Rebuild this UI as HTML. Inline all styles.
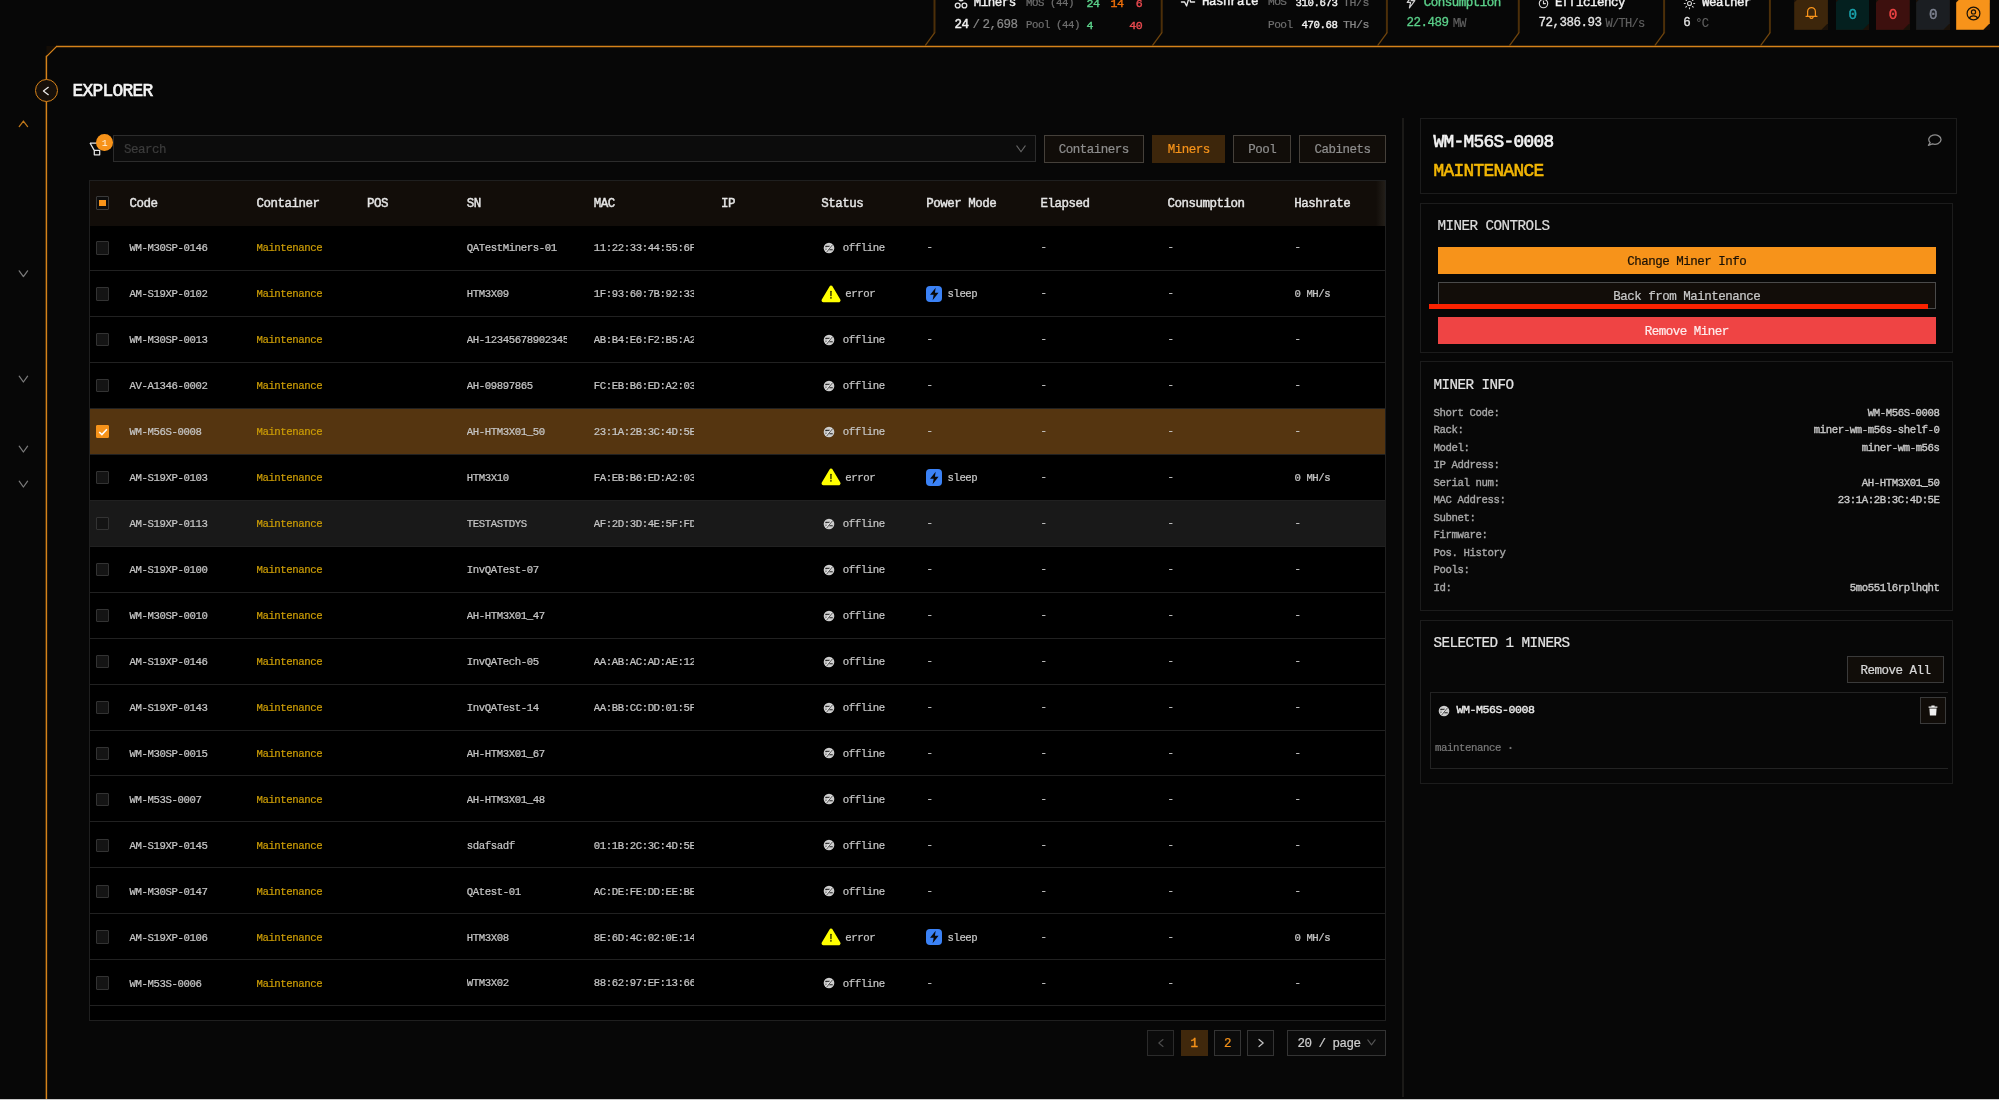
<!DOCTYPE html>
<html lang="en">
<head>
<meta charset="utf-8">
<title>Explorer</title>
<style>
*{box-sizing:border-box;margin:0;padding:0}
html,body{width:1999px;height:1100px;overflow:hidden;background:#070707}
body{position:relative;font-family:"Liberation Mono","DejaVu Sans Mono",monospace;color:#d6d6d6;-webkit-font-smoothing:antialiased}
#root{position:absolute;left:0;top:0;width:1999px;height:1100px;will-change:transform}
.t{position:absolute;line-height:1;white-space:pre;-webkit-text-stroke:0.22px}
.abs{position:absolute}
svg{position:absolute;overflow:visible}
.box{position:absolute;border:1px solid #1d1d1d}
.cb{position:absolute;left:96px;width:13.4px;height:13.4px;border:1px solid #333;background:#141414;border-radius:1px}
.clip{position:absolute;overflow:hidden;height:14px;width:100px}
.clip .t{left:0}
.btn{position:absolute;border:1px solid #3e3a35;background:#110d09}
</style>
</head>
<body>
<div id="root">

<svg width="1999" height="1100" style="left:0;top:0" fill="none" stroke="#d5821a" stroke-width="1.5">
<path d="M46.4 1100 V56.4 L56.4 46.4 H1999"/>
<path d="M46.4 46 L56 46 L46.4 55.8 Z" fill="#140d06" stroke="none"/>
<path d="M934.5 0 V33" stroke="#4c2f09" stroke-width="2"/>
<path d="M934.7 32.6 L925.2 45.6" stroke="#70450d" stroke-width="1.3"/>
<path d="M1161.7 0 V33" stroke="#4c2f09" stroke-width="2"/>
<path d="M1161.9 32.6 L1152.4 45.6" stroke="#70450d" stroke-width="1.3"/>
<path d="M1386.9 0 V33" stroke="#4c2f09" stroke-width="2"/>
<path d="M1387.1 32.6 L1377.6 45.6" stroke="#70450d" stroke-width="1.3"/>
<path d="M1518.8 0 V33" stroke="#4c2f09" stroke-width="2"/>
<path d="M1519.0 32.6 L1509.5 45.6" stroke="#70450d" stroke-width="1.3"/>
<path d="M1664.1 0 V33" stroke="#4c2f09" stroke-width="2"/>
<path d="M1664.3 32.6 L1654.8 45.6" stroke="#70450d" stroke-width="1.3"/>
<path d="M1769.9 0 V33" stroke="#4c2f09" stroke-width="2"/>
<path d="M1770.1 32.6 L1760.6 45.6" stroke="#70450d" stroke-width="1.3"/>
</svg>
<svg width="14" height="14" style="left:953.6px;top:-5px" viewBox="0 0 14 14" fill="none" stroke="#e4e4e4" stroke-width="1.35"><circle cx="7" cy="3.3" r="2.45"/><circle cx="3.7" cy="10.5" r="2.4"/><circle cx="10.4" cy="10.5" r="2.4"/></svg>
<span class="t" style="top:-2.67px;font-size:12.49px;letter-spacing:-0.490px;color:#f2f2f2;-webkit-text-stroke:0.42px;left:973.80px;">Miners</span>
<span class="t" style="top:-2.10px;font-size:10.70px;letter-spacing:-0.420px;color:#6f6f6f;left:1026.00px;">MOS (44)</span>
<span class="t" style="top:-1.98px;font-size:11.59px;letter-spacing:-0.455px;color:#5bd08a;-webkit-text-stroke:0.39px;left:1086.60px;">24</span>
<span class="t" style="top:-1.98px;font-size:11.59px;letter-spacing:-0.455px;color:#f0700a;-webkit-text-stroke:0.39px;left:1110.60px;">14</span>
<span class="t" style="top:-1.98px;font-size:11.59px;letter-spacing:-0.455px;color:#ea4a50;-webkit-text-stroke:0.39px;right:856.80px;text-align:right;">6</span>
<span class="t" style="top:19.13px;font-size:12.49px;letter-spacing:-0.490px;color:#f2f2f2;-webkit-text-stroke:0.42px;left:954.60px;">24</span>
<span class="t" style="top:19.13px;font-size:12.49px;letter-spacing:-0.490px;color:#8a8a8a;left:972.40px;">/</span>
<span class="t" style="top:19.13px;font-size:12.49px;letter-spacing:-0.490px;color:#8a8a8a;left:982.60px;">2,698</span>
<span class="t" style="top:19.70px;font-size:10.70px;letter-spacing:-0.420px;color:#6f6f6f;left:1026.00px;">Pool (44)</span>
<span class="t" style="top:19.82px;font-size:11.59px;letter-spacing:-0.455px;color:#5bd08a;-webkit-text-stroke:0.39px;left:1086.60px;">4</span>
<span class="t" style="top:19.82px;font-size:11.59px;letter-spacing:-0.455px;color:#ea4a50;-webkit-text-stroke:0.39px;right:856.80px;text-align:right;">40</span>
<svg width="14" height="12" style="left:1181px;top:-6.5px" viewBox="0 0 14 12" fill="none" stroke="#e8e8e8" stroke-width="1.3" stroke-linejoin="round" stroke-linecap="round"><path d="M0.4 8 H3.6 L5.6 12 L8.2 3 L9.6 8 H13.6"/></svg>
<span class="t" style="top:-3.67px;font-size:12.49px;letter-spacing:-0.490px;color:#f2f2f2;-webkit-text-stroke:0.42px;left:1201.90px;">Hashrate</span>
<span class="t" style="top:-2.63px;font-size:11.13px;letter-spacing:-0.437px;color:#6f6f6f;left:1267.90px;">MOS</span>
<span class="t" style="top:-2.30px;font-size:10.70px;letter-spacing:-0.420px;color:#f2f2f2;-webkit-text-stroke:0.36px;right:661.60px;text-align:right;">310.673</span>
<span class="t" style="top:-2.98px;font-size:11.59px;letter-spacing:-0.455px;color:#6f6f6f;left:1343.00px;">TH/s</span>
<span class="t" style="top:19.97px;font-size:11.13px;letter-spacing:-0.437px;color:#6f6f6f;left:1267.90px;">Pool</span>
<span class="t" style="top:19.70px;font-size:10.70px;letter-spacing:-0.420px;color:#f2f2f2;-webkit-text-stroke:0.36px;right:661.60px;text-align:right;">470.68</span>
<span class="t" style="top:19.02px;font-size:11.59px;letter-spacing:-0.455px;color:#8a8a8a;left:1343.00px;">TH/s</span>
<svg width="10" height="14" style="left:1405.5px;top:-5px" viewBox="0 0 10 14" fill="none" stroke="#cfcfcf" stroke-width="1.2" stroke-linejoin="round"><path d="M6.2 0.8 L1.2 7.4 H4.6 L3.4 13 L8.8 5.6 H5.2 Z"/></svg>
<span class="t" style="top:-2.67px;font-size:12.49px;letter-spacing:-0.490px;color:#5bd08a;-webkit-text-stroke:0.42px;left:1423.80px;">Consumption</span>
<span class="t" style="top:17.33px;font-size:12.49px;letter-spacing:-0.490px;color:#5bd08a;-webkit-text-stroke:0.30px;left:1406.60px;">22.489</span>
<span class="t" style="top:17.64px;font-size:12.09px;letter-spacing:-0.475px;color:#606060;-webkit-text-stroke:0.15px;letter-spacing:-0.756px;left:1452.80px;">MW</span>
<svg width="11" height="11" style="left:1537.5px;top:-1.6px" viewBox="0 0 11 11" fill="none" stroke="#d8d8d8" stroke-width="1.15" stroke-linecap="round"><circle cx="5.5" cy="5.5" r="4.2"/><path d="M5.5 3.1 V5.6 H7.4"/></svg>
<span class="t" style="top:-2.67px;font-size:12.49px;letter-spacing:-0.490px;color:#f2f2f2;-webkit-text-stroke:0.42px;left:1555.00px;">Efficiency</span>
<span class="t" style="top:17.33px;font-size:12.49px;letter-spacing:-0.490px;color:#e4e4e4;-webkit-text-stroke:0.30px;left:1538.40px;">72,386.93</span>
<span class="t" style="top:17.64px;font-size:12.09px;letter-spacing:-0.475px;color:#606060;-webkit-text-stroke:0.15px;letter-spacing:-0.756px;left:1605.60px;">W/TH/s</span>
<svg width="13" height="13" style="left:1682.6px;top:-2.9px" viewBox="0 0 13 13" fill="none" stroke="#d0d0d0" stroke-width="1.1" stroke-linecap="round"><circle cx="6.5" cy="6.5" r="2"/><path d="M6.5 1.3v1M6.5 10.7v1M1.3 6.5h1M10.7 6.5h1M2.8 2.8l0.7 0.7M9.5 9.5l0.7 0.7M2.8 10.2l0.7-0.7M9.5 3.5l0.7-0.7"/></svg>
<span class="t" style="top:-2.67px;font-size:12.49px;letter-spacing:-0.490px;color:#f2f2f2;-webkit-text-stroke:0.42px;left:1701.90px;">Weather</span>
<span class="t" style="top:17.33px;font-size:12.49px;letter-spacing:-0.490px;color:#e4e4e4;-webkit-text-stroke:0.30px;left:1683.30px;">6</span>
<span class="t" style="top:17.64px;font-size:12.09px;letter-spacing:-0.475px;color:#606060;-webkit-text-stroke:0.15px;letter-spacing:-0.756px;left:1695.20px;">°C</span>
<div class="abs" style="left:1794.3px;top:-3.6px;width:33.6px;height:33.4px;background:#1a1109"></div>
<div class="abs" style="left:1794.3px;top:-3.6px;width:33.6px;height:33.4px;background:#3d260b;clip-path:polygon(6px 0,100% 0,100% calc(100% - 6.5px),calc(100% - 6.5px) 100%,0 100%,0 6px)"><svg width="13" height="14" style="left:10.3px;top:9.6px" viewBox="0 0 13 14" fill="none" stroke="#f7931a" stroke-width="1.25" stroke-linejoin="round" stroke-linecap="round"><path d="M2.6 10.3 V5.8 a3.9 4.3 0 0 1 7.8 0 V10.3 M1 10.3 H12 M4.9 11.2 a1.7 1.9 0 0 0 3.2 0"/></svg></div>
<div class="abs" style="left:1835.8px;top:-3.6px;width:33.6px;height:33.4px;background:#1a1109"></div>
<div class="abs" style="left:1835.8px;top:-3.6px;width:33.6px;height:33.4px;background:#04201f;clip-path:polygon(6px 0,100% 0,100% calc(100% - 6.5px),calc(100% - 6.5px) 100%,0 100%,0 6px)"><span class="t" style="left:0;width:33.6px;text-align:center;top:11.6px;font-size:14.26px;letter-spacing:-0.560px;color:#1aa3ad;-webkit-text-stroke:0.45px">0</span></div>
<div class="abs" style="left:1876.0px;top:-3.6px;width:33.6px;height:33.4px;background:#1a1109"></div>
<div class="abs" style="left:1876.0px;top:-3.6px;width:33.6px;height:33.4px;background:#3d100e;clip-path:polygon(6px 0,100% 0,100% calc(100% - 6.5px),calc(100% - 6.5px) 100%,0 100%,0 6px)"><span class="t" style="left:0;width:33.6px;text-align:center;top:11.6px;font-size:14.26px;letter-spacing:-0.560px;color:#ef4444;-webkit-text-stroke:0.45px">0</span></div>
<div class="abs" style="left:1916.2px;top:-3.6px;width:33.6px;height:33.4px;background:#1a1109"></div>
<div class="abs" style="left:1916.2px;top:-3.6px;width:33.6px;height:33.4px;background:#1b1e22;clip-path:polygon(6px 0,100% 0,100% calc(100% - 6.5px),calc(100% - 6.5px) 100%,0 100%,0 6px)"><span class="t" style="left:0;width:33.6px;text-align:center;top:11.6px;font-size:14.26px;letter-spacing:-0.560px;color:#7d8290;-webkit-text-stroke:0.45px">0</span></div>
<div class="abs" style="left:1956.2px;top:-3.6px;width:33.6px;height:33.4px;background:#1a1109"></div>
<div class="abs" style="left:1956.2px;top:-3.6px;width:33.6px;height:33.4px;background:#f7931a;clip-path:polygon(6px 0,100% 0,100% calc(100% - 6.5px),calc(100% - 6.5px) 100%,0 100%,0 6px)"><svg width="15" height="15" style="left:9.4px;top:9.2px" viewBox="0 0 15 15" fill="none" stroke="#1a1208" stroke-width="1.2"><circle cx="7.5" cy="7.5" r="6.4"/><circle cx="7.5" cy="5.9" r="2.1"/><path d="M3.4 12.2 a4.3 3.4 0 0 1 8.2 0"/></svg></div>
<svg width="60" height="600" style="left:0;top:0" fill="none" stroke-width="1.25" stroke-linecap="round" stroke-linejoin="round">
<path d="M19.2 126.6 L23.4 121 L27.6 126.6" stroke="#c0781a"/>
<path d="M19.2 270.8 L23.4 276.6 L27.6 270.8" stroke="#7a7a7a"/>
<path d="M19.2 376.2 L23.4 382.0 L27.6 376.2" stroke="#7a7a7a"/>
<path d="M19.2 446.2 L23.4 452.0 L27.6 446.2" stroke="#7a7a7a"/>
<path d="M19.2 481.2 L23.4 487.0 L27.6 481.2" stroke="#7a7a7a"/>
</svg>
<div class="abs" style="left:35px;top:79.1px;width:22.8px;height:22.8px;border-radius:50%;border:1.2px solid #d7831a;background:#17100a"></div>
<svg width="10" height="10" style="left:41px;top:85.6px" viewBox="0 0 10 10" fill="none" stroke="#ededed" stroke-width="1.2" stroke-linecap="round" stroke-linejoin="round"><path d="M7.3 1.3 L2.4 5 L7.3 8.7"/></svg>
<span class="t" style="top:82.94px;font-size:17.84px;letter-spacing:-0.700px;color:#f4f4f4;-webkit-text-stroke:0.61px;left:72.40px;">EXPLORER</span>
<svg width="14" height="15" style="left:89px;top:141.6px" viewBox="0 0 14 15" fill="none" stroke="#e6e6e6" stroke-width="1.25" stroke-linejoin="round"><path d="M1 1 H12.6 L9.6 6 M1 1 L5.4 8.6 M5.3 8.4 H10.7 V12.8 H5.3 Z"/></svg>
<div class="abs" style="left:96.1px;top:134.3px;width:16.7px;height:16.7px;border-radius:50%;background:#f7931a"></div>
<span class="t" style="top:139.16px;font-size:9.84px;letter-spacing:-0.386px;color:#fff1dc;-webkit-text-stroke:0;left:104.40px;width:400px;margin-left:-200px;text-align:center;">1</span>
<div class="abs" style="left:113px;top:135.2px;width:922.8px;height:26.6px;border:1px solid #2c2c2c;background:#0c0c0c"></div>
<span class="t" style="top:143.93px;font-size:12.49px;letter-spacing:-0.490px;color:#3c3c3c;left:123.90px;">Search</span>
<svg width="10" height="8" style="left:1016.4px;top:144.6px" viewBox="0 0 10 8" fill="none" stroke="#666" stroke-width="1.1" stroke-linecap="round" stroke-linejoin="round"><path d="M0.8 0.9 L5 6.8 L9.2 0.9"/></svg>
<div class="btn" style="left:1043.5px;top:134.5px;width:100.7px;height:28.3px;border-color:#45403a"></div>
<span class="t" style="top:143.93px;font-size:12.49px;letter-spacing:-0.490px;color:#8e8e8e;left:1093.85px;width:400px;margin-left:-200px;text-align:center;">Containers</span>
<div class="abs" style="left:1152.2px;top:134.5px;width:73.0px;height:28.3px;background:#3d260b"></div>
<span class="t" style="top:143.93px;font-size:12.49px;letter-spacing:-0.490px;color:#f7931a;left:1188.70px;width:400px;margin-left:-200px;text-align:center;">Miners</span>
<div class="btn" style="left:1233.2px;top:134.5px;width:58.2px;height:28.3px;border-color:#45403a"></div>
<span class="t" style="top:143.93px;font-size:12.49px;letter-spacing:-0.490px;color:#8e8e8e;left:1262.30px;width:400px;margin-left:-200px;text-align:center;">Pool</span>
<div class="btn" style="left:1299.2px;top:134.5px;width:86.8px;height:28.3px;border-color:#45403a"></div>
<span class="t" style="top:143.93px;font-size:12.49px;letter-spacing:-0.490px;color:#8e8e8e;left:1342.60px;width:400px;margin-left:-200px;text-align:center;">Cabinets</span>
<div class="abs" style="left:89.0px;top:180px;width:1296.8px;height:840.6px;background:#000;border:1px solid #1f1f1f"></div>
<div class="abs" style="left:89.6px;top:180.6px;width:1295.6px;height:45px;background:#120d09"></div>
<div class="abs" style="left:1376px;top:180.6px;width:9.4px;height:45px;background:linear-gradient(90deg,rgba(40,36,30,0),rgba(40,36,30,.75))"></div>
<span class="t" style="top:198.03px;font-size:12.49px;letter-spacing:-0.490px;color:#e6e6e6;-webkit-text-stroke:0.42px;left:129.60px;">Code</span>
<span class="t" style="top:198.03px;font-size:12.49px;letter-spacing:-0.490px;color:#e6e6e6;-webkit-text-stroke:0.42px;left:256.40px;">Container</span>
<span class="t" style="top:198.03px;font-size:12.49px;letter-spacing:-0.490px;color:#e6e6e6;-webkit-text-stroke:0.42px;left:366.90px;">POS</span>
<span class="t" style="top:198.03px;font-size:12.49px;letter-spacing:-0.490px;color:#e6e6e6;-webkit-text-stroke:0.42px;left:466.80px;">SN</span>
<span class="t" style="top:198.03px;font-size:12.49px;letter-spacing:-0.490px;color:#e6e6e6;-webkit-text-stroke:0.42px;left:593.70px;">MAC</span>
<span class="t" style="top:198.03px;font-size:12.49px;letter-spacing:-0.490px;color:#e6e6e6;-webkit-text-stroke:0.42px;left:721.00px;">IP</span>
<span class="t" style="top:198.03px;font-size:12.49px;letter-spacing:-0.490px;color:#e6e6e6;-webkit-text-stroke:0.42px;left:821.20px;">Status</span>
<span class="t" style="top:198.03px;font-size:12.49px;letter-spacing:-0.490px;color:#e6e6e6;-webkit-text-stroke:0.42px;left:926.20px;">Power Mode</span>
<span class="t" style="top:198.03px;font-size:12.49px;letter-spacing:-0.490px;color:#e6e6e6;-webkit-text-stroke:0.42px;left:1040.40px;">Elapsed</span>
<span class="t" style="top:198.03px;font-size:12.49px;letter-spacing:-0.490px;color:#e6e6e6;-webkit-text-stroke:0.42px;left:1167.40px;">Consumption</span>
<span class="t" style="top:198.03px;font-size:12.49px;letter-spacing:-0.490px;color:#e6e6e6;-webkit-text-stroke:0.42px;left:1294.20px;">Hashrate</span>
<div class="cb" style="top:196.3px;background:#0c0c0c;border-color:#3a3a3a"></div>
<div class="abs" style="left:99.4px;top:199.7px;width:6.6px;height:6.6px;background:#f7931a"></div>
<div class="abs" style="left:89.6px;top:270.00px;width:1295.6px;height:1px;background:#212121"></div>
<div class="cb" style="top:241.20px"></div>
<span class="t" style="top:243.30px;font-size:10.70px;letter-spacing:-0.420px;color:#c6c6c6;left:129.60px;">WM-M30SP-0146</span>
<span class="t" style="top:243.30px;font-size:10.70px;letter-spacing:-0.420px;color:#cb9c06;left:256.40px;">Maintenance</span>
<div class="clip" style="left:466.8px;top:240.90px"><span class="t" style="top:2.40px;font-size:10.70px;letter-spacing:-0.420px;color:#c6c6c6;left:0.00px;">QATestMiners-01</span></div>
<div class="clip" style="left:593.7px;top:240.90px"><span class="t" style="top:2.40px;font-size:10.70px;letter-spacing:-0.420px;color:#c6c6c6;left:0.00px;">11:22:33:44:55:6F</span></div>
<svg width="12" height="12" style="left:823.40px;top:242.00px" viewBox="0 0 12 12"><circle cx="6" cy="6" r="5.3" fill="#cdcdcd"/><path d="M3.1 4.4 H7.1" stroke="#3c3c3c" stroke-width="1.25"/><path d="M6.4 7.7 H9.7" stroke="#484848" stroke-width="1.3"/><circle cx="3" cy="4.4" r="0.75" fill="#1e1e1e"/><circle cx="3" cy="7.2" r="0.6" fill="#4a4a4a"/><path d="M9.7 2.5 L3.7 10" stroke="#4e4e4e" stroke-width="0.95"/><path d="M8.9 2 L2.7 9.7" stroke="#ececec" stroke-width="0.8"/></svg>
<span class="t" style="top:243.30px;font-size:10.70px;letter-spacing:-0.420px;color:#c6c6c6;left:842.80px;">offline</span>
<span class="t" style="top:242.30px;font-size:10.70px;letter-spacing:-0.420px;color:#c6c6c6;left:926.40px;">-</span>
<span class="t" style="top:242.30px;font-size:10.70px;letter-spacing:-0.420px;color:#c6c6c6;left:1294.40px;">-</span>
<span class="t" style="top:242.30px;font-size:10.70px;letter-spacing:-0.420px;color:#c6c6c6;left:1040.60px;">-</span>
<span class="t" style="top:242.30px;font-size:10.70px;letter-spacing:-0.420px;color:#c6c6c6;left:1167.60px;">-</span>
<div class="abs" style="left:89.6px;top:315.95px;width:1295.6px;height:1px;background:#212121"></div>
<div class="cb" style="top:287.15px"></div>
<span class="t" style="top:289.25px;font-size:10.70px;letter-spacing:-0.420px;color:#c6c6c6;left:129.60px;">AM-S19XP-0102</span>
<span class="t" style="top:289.25px;font-size:10.70px;letter-spacing:-0.420px;color:#cb9c06;left:256.40px;">Maintenance</span>
<div class="clip" style="left:466.8px;top:286.85px"><span class="t" style="top:2.40px;font-size:10.70px;letter-spacing:-0.420px;color:#c6c6c6;left:0.00px;">HTM3X09</span></div>
<div class="clip" style="left:593.7px;top:286.85px"><span class="t" style="top:2.40px;font-size:10.70px;letter-spacing:-0.420px;color:#c6c6c6;left:0.00px;">1F:93:60:7B:92:33</span></div>
<svg width="20" height="18" style="left:820.6px;top:284.65px" viewBox="0 0 20 18"><path d="M10.05 2.3 L17.8 15.4 H2.3 Z" fill="#ffff00" stroke="#ffff00" stroke-width="3.5" stroke-linejoin="round"/><path d="M9.95 6.3 V10.7" stroke="#161600" stroke-width="1.25" stroke-linecap="round"/><circle cx="9.95" cy="12.9" r="0.8" fill="#161600"/></svg>
<span class="t" style="top:289.25px;font-size:10.70px;letter-spacing:-0.420px;color:#c6c6c6;left:845.20px;">error</span>
<div class="abs" style="left:926px;top:285.55px;width:15.8px;height:16.4px;border-radius:4px;background:#3b82f6"></div>
<svg width="10.6" height="13.8" style="left:928.7px;top:286.75px" viewBox="0 0 10 13"><path d="M6.3 0.6 L1 7.3 H4.4 L3.4 12.4 L9 5.4 H5.6 Z" fill="#0a0a0a"/></svg>
<span class="t" style="top:289.25px;font-size:10.70px;letter-spacing:-0.420px;color:#c6c6c6;left:947.40px;">sleep</span>
<span class="t" style="top:289.25px;font-size:10.70px;letter-spacing:-0.420px;color:#c6c6c6;left:1294.40px;">0 MH/s</span>
<span class="t" style="top:288.25px;font-size:10.70px;letter-spacing:-0.420px;color:#c6c6c6;left:1040.60px;">-</span>
<span class="t" style="top:288.25px;font-size:10.70px;letter-spacing:-0.420px;color:#c6c6c6;left:1167.60px;">-</span>
<div class="abs" style="left:89.6px;top:361.90px;width:1295.6px;height:1px;background:#212121"></div>
<div class="cb" style="top:333.10px"></div>
<span class="t" style="top:335.20px;font-size:10.70px;letter-spacing:-0.420px;color:#c6c6c6;left:129.60px;">WM-M30SP-0013</span>
<span class="t" style="top:335.20px;font-size:10.70px;letter-spacing:-0.420px;color:#cb9c06;left:256.40px;">Maintenance</span>
<div class="clip" style="left:466.8px;top:332.80px"><span class="t" style="top:2.40px;font-size:10.70px;letter-spacing:-0.420px;color:#c6c6c6;left:0.00px;">AH-12345678902345</span></div>
<div class="clip" style="left:593.7px;top:332.80px"><span class="t" style="top:2.40px;font-size:10.70px;letter-spacing:-0.420px;color:#c6c6c6;left:0.00px;">AB:B4:E6:F2:B5:A2</span></div>
<svg width="12" height="12" style="left:823.40px;top:333.90px" viewBox="0 0 12 12"><circle cx="6" cy="6" r="5.3" fill="#cdcdcd"/><path d="M3.1 4.4 H7.1" stroke="#3c3c3c" stroke-width="1.25"/><path d="M6.4 7.7 H9.7" stroke="#484848" stroke-width="1.3"/><circle cx="3" cy="4.4" r="0.75" fill="#1e1e1e"/><circle cx="3" cy="7.2" r="0.6" fill="#4a4a4a"/><path d="M9.7 2.5 L3.7 10" stroke="#4e4e4e" stroke-width="0.95"/><path d="M8.9 2 L2.7 9.7" stroke="#ececec" stroke-width="0.8"/></svg>
<span class="t" style="top:335.20px;font-size:10.70px;letter-spacing:-0.420px;color:#c6c6c6;left:842.80px;">offline</span>
<span class="t" style="top:334.20px;font-size:10.70px;letter-spacing:-0.420px;color:#c6c6c6;left:926.40px;">-</span>
<span class="t" style="top:334.20px;font-size:10.70px;letter-spacing:-0.420px;color:#c6c6c6;left:1294.40px;">-</span>
<span class="t" style="top:334.20px;font-size:10.70px;letter-spacing:-0.420px;color:#c6c6c6;left:1040.60px;">-</span>
<span class="t" style="top:334.20px;font-size:10.70px;letter-spacing:-0.420px;color:#c6c6c6;left:1167.60px;">-</span>
<div class="abs" style="left:89.6px;top:407.85px;width:1295.6px;height:1px;background:#212121"></div>
<div class="cb" style="top:379.05px"></div>
<span class="t" style="top:381.15px;font-size:10.70px;letter-spacing:-0.420px;color:#c6c6c6;left:129.60px;">AV-A1346-0002</span>
<span class="t" style="top:381.15px;font-size:10.70px;letter-spacing:-0.420px;color:#cb9c06;left:256.40px;">Maintenance</span>
<div class="clip" style="left:466.8px;top:378.75px"><span class="t" style="top:2.40px;font-size:10.70px;letter-spacing:-0.420px;color:#c6c6c6;left:0.00px;">AH-09897865</span></div>
<div class="clip" style="left:593.7px;top:378.75px"><span class="t" style="top:2.40px;font-size:10.70px;letter-spacing:-0.420px;color:#c6c6c6;left:0.00px;">FC:EB:B6:ED:A2:03</span></div>
<svg width="12" height="12" style="left:823.40px;top:379.85px" viewBox="0 0 12 12"><circle cx="6" cy="6" r="5.3" fill="#cdcdcd"/><path d="M3.1 4.4 H7.1" stroke="#3c3c3c" stroke-width="1.25"/><path d="M6.4 7.7 H9.7" stroke="#484848" stroke-width="1.3"/><circle cx="3" cy="4.4" r="0.75" fill="#1e1e1e"/><circle cx="3" cy="7.2" r="0.6" fill="#4a4a4a"/><path d="M9.7 2.5 L3.7 10" stroke="#4e4e4e" stroke-width="0.95"/><path d="M8.9 2 L2.7 9.7" stroke="#ececec" stroke-width="0.8"/></svg>
<span class="t" style="top:381.15px;font-size:10.70px;letter-spacing:-0.420px;color:#c6c6c6;left:842.80px;">offline</span>
<span class="t" style="top:380.15px;font-size:10.70px;letter-spacing:-0.420px;color:#c6c6c6;left:926.40px;">-</span>
<span class="t" style="top:380.15px;font-size:10.70px;letter-spacing:-0.420px;color:#c6c6c6;left:1294.40px;">-</span>
<span class="t" style="top:380.15px;font-size:10.70px;letter-spacing:-0.420px;color:#c6c6c6;left:1040.60px;">-</span>
<span class="t" style="top:380.15px;font-size:10.70px;letter-spacing:-0.420px;color:#c6c6c6;left:1167.60px;">-</span>
<div class="abs" style="left:89.6px;top:408.95px;width:1295.6px;height:45.35px;background:#553510"></div>
<div class="abs" style="left:89.6px;top:453.80px;width:1295.6px;height:1px;background:#212121"></div>
<div class="cb" style="top:425.00px;background:#f7931a;border-color:#f7931a"></div>
<svg width="10" height="8" style="left:97.8px;top:427.80px" viewBox="0 0 10 8" fill="none" stroke="#fff" stroke-width="1.6"><path d="M1.2 4 L3.9 6.6 L8.9 1.3"/></svg>
<span class="t" style="top:427.10px;font-size:10.70px;letter-spacing:-0.420px;color:#c6c6c6;left:129.60px;">WM-M56S-0008</span>
<span class="t" style="top:427.10px;font-size:10.70px;letter-spacing:-0.420px;color:#cb9c06;left:256.40px;">Maintenance</span>
<div class="clip" style="left:466.8px;top:424.70px"><span class="t" style="top:2.40px;font-size:10.70px;letter-spacing:-0.420px;color:#c6c6c6;left:0.00px;">AH-HTM3X01_50</span></div>
<div class="clip" style="left:593.7px;top:424.70px"><span class="t" style="top:2.40px;font-size:10.70px;letter-spacing:-0.420px;color:#c6c6c6;left:0.00px;">23:1A:2B:3C:4D:5E</span></div>
<svg width="12" height="12" style="left:823.40px;top:425.80px" viewBox="0 0 12 12"><circle cx="6" cy="6" r="5.3" fill="#cdcdcd"/><path d="M3.1 4.4 H7.1" stroke="#3c3c3c" stroke-width="1.25"/><path d="M6.4 7.7 H9.7" stroke="#484848" stroke-width="1.3"/><circle cx="3" cy="4.4" r="0.75" fill="#1e1e1e"/><circle cx="3" cy="7.2" r="0.6" fill="#4a4a4a"/><path d="M9.7 2.5 L3.7 10" stroke="#4e4e4e" stroke-width="0.95"/><path d="M8.9 2 L2.7 9.7" stroke="#ececec" stroke-width="0.8"/></svg>
<span class="t" style="top:427.10px;font-size:10.70px;letter-spacing:-0.420px;color:#c6c6c6;left:842.80px;">offline</span>
<span class="t" style="top:426.10px;font-size:10.70px;letter-spacing:-0.420px;color:#c6c6c6;left:926.40px;">-</span>
<span class="t" style="top:426.10px;font-size:10.70px;letter-spacing:-0.420px;color:#c6c6c6;left:1294.40px;">-</span>
<span class="t" style="top:426.10px;font-size:10.70px;letter-spacing:-0.420px;color:#c6c6c6;left:1040.60px;">-</span>
<span class="t" style="top:426.10px;font-size:10.70px;letter-spacing:-0.420px;color:#c6c6c6;left:1167.60px;">-</span>
<div class="abs" style="left:89.6px;top:499.75px;width:1295.6px;height:1px;background:#212121"></div>
<div class="cb" style="top:470.95px"></div>
<span class="t" style="top:473.05px;font-size:10.70px;letter-spacing:-0.420px;color:#c6c6c6;left:129.60px;">AM-S19XP-0103</span>
<span class="t" style="top:473.05px;font-size:10.70px;letter-spacing:-0.420px;color:#cb9c06;left:256.40px;">Maintenance</span>
<div class="clip" style="left:466.8px;top:470.65px"><span class="t" style="top:2.40px;font-size:10.70px;letter-spacing:-0.420px;color:#c6c6c6;left:0.00px;">HTM3X10</span></div>
<div class="clip" style="left:593.7px;top:470.65px"><span class="t" style="top:2.40px;font-size:10.70px;letter-spacing:-0.420px;color:#c6c6c6;left:0.00px;">FA:EB:B6:ED:A2:03</span></div>
<svg width="20" height="18" style="left:820.6px;top:468.45px" viewBox="0 0 20 18"><path d="M10.05 2.3 L17.8 15.4 H2.3 Z" fill="#ffff00" stroke="#ffff00" stroke-width="3.5" stroke-linejoin="round"/><path d="M9.95 6.3 V10.7" stroke="#161600" stroke-width="1.25" stroke-linecap="round"/><circle cx="9.95" cy="12.9" r="0.8" fill="#161600"/></svg>
<span class="t" style="top:473.05px;font-size:10.70px;letter-spacing:-0.420px;color:#c6c6c6;left:845.20px;">error</span>
<div class="abs" style="left:926px;top:469.35px;width:15.8px;height:16.4px;border-radius:4px;background:#3b82f6"></div>
<svg width="10.6" height="13.8" style="left:928.7px;top:470.55px" viewBox="0 0 10 13"><path d="M6.3 0.6 L1 7.3 H4.4 L3.4 12.4 L9 5.4 H5.6 Z" fill="#0a0a0a"/></svg>
<span class="t" style="top:473.05px;font-size:10.70px;letter-spacing:-0.420px;color:#c6c6c6;left:947.40px;">sleep</span>
<span class="t" style="top:473.05px;font-size:10.70px;letter-spacing:-0.420px;color:#c6c6c6;left:1294.40px;">0 MH/s</span>
<span class="t" style="top:472.05px;font-size:10.70px;letter-spacing:-0.420px;color:#c6c6c6;left:1040.60px;">-</span>
<span class="t" style="top:472.05px;font-size:10.70px;letter-spacing:-0.420px;color:#c6c6c6;left:1167.60px;">-</span>
<div class="abs" style="left:89.6px;top:500.85px;width:1295.6px;height:45.35px;background:#191919"></div>
<div class="abs" style="left:89.6px;top:545.70px;width:1295.6px;height:1px;background:#212121"></div>
<div class="cb" style="top:516.90px"></div>
<span class="t" style="top:519.00px;font-size:10.70px;letter-spacing:-0.420px;color:#c6c6c6;left:129.60px;">AM-S19XP-0113</span>
<span class="t" style="top:519.00px;font-size:10.70px;letter-spacing:-0.420px;color:#cb9c06;left:256.40px;">Maintenance</span>
<div class="clip" style="left:466.8px;top:516.60px"><span class="t" style="top:2.40px;font-size:10.70px;letter-spacing:-0.420px;color:#c6c6c6;left:0.00px;">TESTASTDYS</span></div>
<div class="clip" style="left:593.7px;top:516.60px"><span class="t" style="top:2.40px;font-size:10.70px;letter-spacing:-0.420px;color:#c6c6c6;left:0.00px;">AF:2D:3D:4E:5F:FD</span></div>
<svg width="12" height="12" style="left:823.40px;top:517.70px" viewBox="0 0 12 12"><circle cx="6" cy="6" r="5.3" fill="#cdcdcd"/><path d="M3.1 4.4 H7.1" stroke="#3c3c3c" stroke-width="1.25"/><path d="M6.4 7.7 H9.7" stroke="#484848" stroke-width="1.3"/><circle cx="3" cy="4.4" r="0.75" fill="#1e1e1e"/><circle cx="3" cy="7.2" r="0.6" fill="#4a4a4a"/><path d="M9.7 2.5 L3.7 10" stroke="#4e4e4e" stroke-width="0.95"/><path d="M8.9 2 L2.7 9.7" stroke="#ececec" stroke-width="0.8"/></svg>
<span class="t" style="top:519.00px;font-size:10.70px;letter-spacing:-0.420px;color:#c6c6c6;left:842.80px;">offline</span>
<span class="t" style="top:518.00px;font-size:10.70px;letter-spacing:-0.420px;color:#c6c6c6;left:926.40px;">-</span>
<span class="t" style="top:518.00px;font-size:10.70px;letter-spacing:-0.420px;color:#c6c6c6;left:1294.40px;">-</span>
<span class="t" style="top:518.00px;font-size:10.70px;letter-spacing:-0.420px;color:#c6c6c6;left:1040.60px;">-</span>
<span class="t" style="top:518.00px;font-size:10.70px;letter-spacing:-0.420px;color:#c6c6c6;left:1167.60px;">-</span>
<div class="abs" style="left:89.6px;top:591.65px;width:1295.6px;height:1px;background:#212121"></div>
<div class="cb" style="top:562.85px"></div>
<span class="t" style="top:564.95px;font-size:10.70px;letter-spacing:-0.420px;color:#c6c6c6;left:129.60px;">AM-S19XP-0100</span>
<span class="t" style="top:564.95px;font-size:10.70px;letter-spacing:-0.420px;color:#cb9c06;left:256.40px;">Maintenance</span>
<div class="clip" style="left:466.8px;top:562.55px"><span class="t" style="top:2.40px;font-size:10.70px;letter-spacing:-0.420px;color:#c6c6c6;left:0.00px;">InvQATest-07</span></div>
<svg width="12" height="12" style="left:823.40px;top:563.65px" viewBox="0 0 12 12"><circle cx="6" cy="6" r="5.3" fill="#cdcdcd"/><path d="M3.1 4.4 H7.1" stroke="#3c3c3c" stroke-width="1.25"/><path d="M6.4 7.7 H9.7" stroke="#484848" stroke-width="1.3"/><circle cx="3" cy="4.4" r="0.75" fill="#1e1e1e"/><circle cx="3" cy="7.2" r="0.6" fill="#4a4a4a"/><path d="M9.7 2.5 L3.7 10" stroke="#4e4e4e" stroke-width="0.95"/><path d="M8.9 2 L2.7 9.7" stroke="#ececec" stroke-width="0.8"/></svg>
<span class="t" style="top:564.95px;font-size:10.70px;letter-spacing:-0.420px;color:#c6c6c6;left:842.80px;">offline</span>
<span class="t" style="top:563.95px;font-size:10.70px;letter-spacing:-0.420px;color:#c6c6c6;left:926.40px;">-</span>
<span class="t" style="top:563.95px;font-size:10.70px;letter-spacing:-0.420px;color:#c6c6c6;left:1294.40px;">-</span>
<span class="t" style="top:563.95px;font-size:10.70px;letter-spacing:-0.420px;color:#c6c6c6;left:1040.60px;">-</span>
<span class="t" style="top:563.95px;font-size:10.70px;letter-spacing:-0.420px;color:#c6c6c6;left:1167.60px;">-</span>
<div class="abs" style="left:89.6px;top:637.60px;width:1295.6px;height:1px;background:#212121"></div>
<div class="cb" style="top:608.80px"></div>
<span class="t" style="top:610.90px;font-size:10.70px;letter-spacing:-0.420px;color:#c6c6c6;left:129.60px;">WM-M30SP-0010</span>
<span class="t" style="top:610.90px;font-size:10.70px;letter-spacing:-0.420px;color:#cb9c06;left:256.40px;">Maintenance</span>
<div class="clip" style="left:466.8px;top:608.50px"><span class="t" style="top:2.40px;font-size:10.70px;letter-spacing:-0.420px;color:#c6c6c6;left:0.00px;">AH-HTM3X01_47</span></div>
<svg width="12" height="12" style="left:823.40px;top:609.60px" viewBox="0 0 12 12"><circle cx="6" cy="6" r="5.3" fill="#cdcdcd"/><path d="M3.1 4.4 H7.1" stroke="#3c3c3c" stroke-width="1.25"/><path d="M6.4 7.7 H9.7" stroke="#484848" stroke-width="1.3"/><circle cx="3" cy="4.4" r="0.75" fill="#1e1e1e"/><circle cx="3" cy="7.2" r="0.6" fill="#4a4a4a"/><path d="M9.7 2.5 L3.7 10" stroke="#4e4e4e" stroke-width="0.95"/><path d="M8.9 2 L2.7 9.7" stroke="#ececec" stroke-width="0.8"/></svg>
<span class="t" style="top:610.90px;font-size:10.70px;letter-spacing:-0.420px;color:#c6c6c6;left:842.80px;">offline</span>
<span class="t" style="top:609.90px;font-size:10.70px;letter-spacing:-0.420px;color:#c6c6c6;left:926.40px;">-</span>
<span class="t" style="top:609.90px;font-size:10.70px;letter-spacing:-0.420px;color:#c6c6c6;left:1294.40px;">-</span>
<span class="t" style="top:609.90px;font-size:10.70px;letter-spacing:-0.420px;color:#c6c6c6;left:1040.60px;">-</span>
<span class="t" style="top:609.90px;font-size:10.70px;letter-spacing:-0.420px;color:#c6c6c6;left:1167.60px;">-</span>
<div class="abs" style="left:89.6px;top:683.55px;width:1295.6px;height:1px;background:#212121"></div>
<div class="cb" style="top:654.75px"></div>
<span class="t" style="top:656.85px;font-size:10.70px;letter-spacing:-0.420px;color:#c6c6c6;left:129.60px;">AM-S19XP-0146</span>
<span class="t" style="top:656.85px;font-size:10.70px;letter-spacing:-0.420px;color:#cb9c06;left:256.40px;">Maintenance</span>
<div class="clip" style="left:466.8px;top:654.45px"><span class="t" style="top:2.40px;font-size:10.70px;letter-spacing:-0.420px;color:#c6c6c6;left:0.00px;">InvQATech-05</span></div>
<div class="clip" style="left:593.7px;top:654.45px"><span class="t" style="top:2.40px;font-size:10.70px;letter-spacing:-0.420px;color:#c6c6c6;left:0.00px;">AA:AB:AC:AD:AE:12</span></div>
<svg width="12" height="12" style="left:823.40px;top:655.55px" viewBox="0 0 12 12"><circle cx="6" cy="6" r="5.3" fill="#cdcdcd"/><path d="M3.1 4.4 H7.1" stroke="#3c3c3c" stroke-width="1.25"/><path d="M6.4 7.7 H9.7" stroke="#484848" stroke-width="1.3"/><circle cx="3" cy="4.4" r="0.75" fill="#1e1e1e"/><circle cx="3" cy="7.2" r="0.6" fill="#4a4a4a"/><path d="M9.7 2.5 L3.7 10" stroke="#4e4e4e" stroke-width="0.95"/><path d="M8.9 2 L2.7 9.7" stroke="#ececec" stroke-width="0.8"/></svg>
<span class="t" style="top:656.85px;font-size:10.70px;letter-spacing:-0.420px;color:#c6c6c6;left:842.80px;">offline</span>
<span class="t" style="top:655.85px;font-size:10.70px;letter-spacing:-0.420px;color:#c6c6c6;left:926.40px;">-</span>
<span class="t" style="top:655.85px;font-size:10.70px;letter-spacing:-0.420px;color:#c6c6c6;left:1294.40px;">-</span>
<span class="t" style="top:655.85px;font-size:10.70px;letter-spacing:-0.420px;color:#c6c6c6;left:1040.60px;">-</span>
<span class="t" style="top:655.85px;font-size:10.70px;letter-spacing:-0.420px;color:#c6c6c6;left:1167.60px;">-</span>
<div class="abs" style="left:89.6px;top:729.50px;width:1295.6px;height:1px;background:#212121"></div>
<div class="cb" style="top:700.70px"></div>
<span class="t" style="top:702.80px;font-size:10.70px;letter-spacing:-0.420px;color:#c6c6c6;left:129.60px;">AM-S19XP-0143</span>
<span class="t" style="top:702.80px;font-size:10.70px;letter-spacing:-0.420px;color:#cb9c06;left:256.40px;">Maintenance</span>
<div class="clip" style="left:466.8px;top:700.40px"><span class="t" style="top:2.40px;font-size:10.70px;letter-spacing:-0.420px;color:#c6c6c6;left:0.00px;">InvQATest-14</span></div>
<div class="clip" style="left:593.7px;top:700.40px"><span class="t" style="top:2.40px;font-size:10.70px;letter-spacing:-0.420px;color:#c6c6c6;left:0.00px;">AA:BB:CC:DD:01:5F</span></div>
<svg width="12" height="12" style="left:823.40px;top:701.50px" viewBox="0 0 12 12"><circle cx="6" cy="6" r="5.3" fill="#cdcdcd"/><path d="M3.1 4.4 H7.1" stroke="#3c3c3c" stroke-width="1.25"/><path d="M6.4 7.7 H9.7" stroke="#484848" stroke-width="1.3"/><circle cx="3" cy="4.4" r="0.75" fill="#1e1e1e"/><circle cx="3" cy="7.2" r="0.6" fill="#4a4a4a"/><path d="M9.7 2.5 L3.7 10" stroke="#4e4e4e" stroke-width="0.95"/><path d="M8.9 2 L2.7 9.7" stroke="#ececec" stroke-width="0.8"/></svg>
<span class="t" style="top:702.80px;font-size:10.70px;letter-spacing:-0.420px;color:#c6c6c6;left:842.80px;">offline</span>
<span class="t" style="top:701.80px;font-size:10.70px;letter-spacing:-0.420px;color:#c6c6c6;left:926.40px;">-</span>
<span class="t" style="top:701.80px;font-size:10.70px;letter-spacing:-0.420px;color:#c6c6c6;left:1294.40px;">-</span>
<span class="t" style="top:701.80px;font-size:10.70px;letter-spacing:-0.420px;color:#c6c6c6;left:1040.60px;">-</span>
<span class="t" style="top:701.80px;font-size:10.70px;letter-spacing:-0.420px;color:#c6c6c6;left:1167.60px;">-</span>
<div class="abs" style="left:89.6px;top:775.45px;width:1295.6px;height:1px;background:#212121"></div>
<div class="cb" style="top:746.65px"></div>
<span class="t" style="top:748.75px;font-size:10.70px;letter-spacing:-0.420px;color:#c6c6c6;left:129.60px;">WM-M30SP-0015</span>
<span class="t" style="top:748.75px;font-size:10.70px;letter-spacing:-0.420px;color:#cb9c06;left:256.40px;">Maintenance</span>
<div class="clip" style="left:466.8px;top:746.35px"><span class="t" style="top:2.40px;font-size:10.70px;letter-spacing:-0.420px;color:#c6c6c6;left:0.00px;">AH-HTM3X01_67</span></div>
<svg width="12" height="12" style="left:823.40px;top:747.45px" viewBox="0 0 12 12"><circle cx="6" cy="6" r="5.3" fill="#cdcdcd"/><path d="M3.1 4.4 H7.1" stroke="#3c3c3c" stroke-width="1.25"/><path d="M6.4 7.7 H9.7" stroke="#484848" stroke-width="1.3"/><circle cx="3" cy="4.4" r="0.75" fill="#1e1e1e"/><circle cx="3" cy="7.2" r="0.6" fill="#4a4a4a"/><path d="M9.7 2.5 L3.7 10" stroke="#4e4e4e" stroke-width="0.95"/><path d="M8.9 2 L2.7 9.7" stroke="#ececec" stroke-width="0.8"/></svg>
<span class="t" style="top:748.75px;font-size:10.70px;letter-spacing:-0.420px;color:#c6c6c6;left:842.80px;">offline</span>
<span class="t" style="top:747.75px;font-size:10.70px;letter-spacing:-0.420px;color:#c6c6c6;left:926.40px;">-</span>
<span class="t" style="top:747.75px;font-size:10.70px;letter-spacing:-0.420px;color:#c6c6c6;left:1294.40px;">-</span>
<span class="t" style="top:747.75px;font-size:10.70px;letter-spacing:-0.420px;color:#c6c6c6;left:1040.60px;">-</span>
<span class="t" style="top:747.75px;font-size:10.70px;letter-spacing:-0.420px;color:#c6c6c6;left:1167.60px;">-</span>
<div class="abs" style="left:89.6px;top:821.40px;width:1295.6px;height:1px;background:#212121"></div>
<div class="cb" style="top:792.60px"></div>
<span class="t" style="top:794.70px;font-size:10.70px;letter-spacing:-0.420px;color:#c6c6c6;left:129.60px;">WM-M53S-0007</span>
<span class="t" style="top:794.70px;font-size:10.70px;letter-spacing:-0.420px;color:#cb9c06;left:256.40px;">Maintenance</span>
<div class="clip" style="left:466.8px;top:792.30px"><span class="t" style="top:2.40px;font-size:10.70px;letter-spacing:-0.420px;color:#c6c6c6;left:0.00px;">AH-HTM3X01_48</span></div>
<svg width="12" height="12" style="left:823.40px;top:793.40px" viewBox="0 0 12 12"><circle cx="6" cy="6" r="5.3" fill="#cdcdcd"/><path d="M3.1 4.4 H7.1" stroke="#3c3c3c" stroke-width="1.25"/><path d="M6.4 7.7 H9.7" stroke="#484848" stroke-width="1.3"/><circle cx="3" cy="4.4" r="0.75" fill="#1e1e1e"/><circle cx="3" cy="7.2" r="0.6" fill="#4a4a4a"/><path d="M9.7 2.5 L3.7 10" stroke="#4e4e4e" stroke-width="0.95"/><path d="M8.9 2 L2.7 9.7" stroke="#ececec" stroke-width="0.8"/></svg>
<span class="t" style="top:794.70px;font-size:10.70px;letter-spacing:-0.420px;color:#c6c6c6;left:842.80px;">offline</span>
<span class="t" style="top:793.70px;font-size:10.70px;letter-spacing:-0.420px;color:#c6c6c6;left:926.40px;">-</span>
<span class="t" style="top:793.70px;font-size:10.70px;letter-spacing:-0.420px;color:#c6c6c6;left:1294.40px;">-</span>
<span class="t" style="top:793.70px;font-size:10.70px;letter-spacing:-0.420px;color:#c6c6c6;left:1040.60px;">-</span>
<span class="t" style="top:793.70px;font-size:10.70px;letter-spacing:-0.420px;color:#c6c6c6;left:1167.60px;">-</span>
<div class="abs" style="left:89.6px;top:867.35px;width:1295.6px;height:1px;background:#212121"></div>
<div class="cb" style="top:838.55px"></div>
<span class="t" style="top:840.65px;font-size:10.70px;letter-spacing:-0.420px;color:#c6c6c6;left:129.60px;">AM-S19XP-0145</span>
<span class="t" style="top:840.65px;font-size:10.70px;letter-spacing:-0.420px;color:#cb9c06;left:256.40px;">Maintenance</span>
<div class="clip" style="left:466.8px;top:838.25px"><span class="t" style="top:2.40px;font-size:10.70px;letter-spacing:-0.420px;color:#c6c6c6;left:0.00px;">sdafsadf</span></div>
<div class="clip" style="left:593.7px;top:838.25px"><span class="t" style="top:2.40px;font-size:10.70px;letter-spacing:-0.420px;color:#c6c6c6;left:0.00px;">01:1B:2C:3C:4D:5E</span></div>
<svg width="12" height="12" style="left:823.40px;top:839.35px" viewBox="0 0 12 12"><circle cx="6" cy="6" r="5.3" fill="#cdcdcd"/><path d="M3.1 4.4 H7.1" stroke="#3c3c3c" stroke-width="1.25"/><path d="M6.4 7.7 H9.7" stroke="#484848" stroke-width="1.3"/><circle cx="3" cy="4.4" r="0.75" fill="#1e1e1e"/><circle cx="3" cy="7.2" r="0.6" fill="#4a4a4a"/><path d="M9.7 2.5 L3.7 10" stroke="#4e4e4e" stroke-width="0.95"/><path d="M8.9 2 L2.7 9.7" stroke="#ececec" stroke-width="0.8"/></svg>
<span class="t" style="top:840.65px;font-size:10.70px;letter-spacing:-0.420px;color:#c6c6c6;left:842.80px;">offline</span>
<span class="t" style="top:839.65px;font-size:10.70px;letter-spacing:-0.420px;color:#c6c6c6;left:926.40px;">-</span>
<span class="t" style="top:839.65px;font-size:10.70px;letter-spacing:-0.420px;color:#c6c6c6;left:1294.40px;">-</span>
<span class="t" style="top:839.65px;font-size:10.70px;letter-spacing:-0.420px;color:#c6c6c6;left:1040.60px;">-</span>
<span class="t" style="top:839.65px;font-size:10.70px;letter-spacing:-0.420px;color:#c6c6c6;left:1167.60px;">-</span>
<div class="abs" style="left:89.6px;top:913.30px;width:1295.6px;height:1px;background:#212121"></div>
<div class="cb" style="top:884.50px"></div>
<span class="t" style="top:886.60px;font-size:10.70px;letter-spacing:-0.420px;color:#c6c6c6;left:129.60px;">WM-M30SP-0147</span>
<span class="t" style="top:886.60px;font-size:10.70px;letter-spacing:-0.420px;color:#cb9c06;left:256.40px;">Maintenance</span>
<div class="clip" style="left:466.8px;top:884.20px"><span class="t" style="top:2.40px;font-size:10.70px;letter-spacing:-0.420px;color:#c6c6c6;left:0.00px;">QAtest-01</span></div>
<div class="clip" style="left:593.7px;top:884.20px"><span class="t" style="top:2.40px;font-size:10.70px;letter-spacing:-0.420px;color:#c6c6c6;left:0.00px;">AC:DE:FE:DD:EE:BE</span></div>
<svg width="12" height="12" style="left:823.40px;top:885.30px" viewBox="0 0 12 12"><circle cx="6" cy="6" r="5.3" fill="#cdcdcd"/><path d="M3.1 4.4 H7.1" stroke="#3c3c3c" stroke-width="1.25"/><path d="M6.4 7.7 H9.7" stroke="#484848" stroke-width="1.3"/><circle cx="3" cy="4.4" r="0.75" fill="#1e1e1e"/><circle cx="3" cy="7.2" r="0.6" fill="#4a4a4a"/><path d="M9.7 2.5 L3.7 10" stroke="#4e4e4e" stroke-width="0.95"/><path d="M8.9 2 L2.7 9.7" stroke="#ececec" stroke-width="0.8"/></svg>
<span class="t" style="top:886.60px;font-size:10.70px;letter-spacing:-0.420px;color:#c6c6c6;left:842.80px;">offline</span>
<span class="t" style="top:885.60px;font-size:10.70px;letter-spacing:-0.420px;color:#c6c6c6;left:926.40px;">-</span>
<span class="t" style="top:885.60px;font-size:10.70px;letter-spacing:-0.420px;color:#c6c6c6;left:1294.40px;">-</span>
<span class="t" style="top:885.60px;font-size:10.70px;letter-spacing:-0.420px;color:#c6c6c6;left:1040.60px;">-</span>
<span class="t" style="top:885.60px;font-size:10.70px;letter-spacing:-0.420px;color:#c6c6c6;left:1167.60px;">-</span>
<div class="abs" style="left:89.6px;top:959.25px;width:1295.6px;height:1px;background:#212121"></div>
<div class="cb" style="top:930.45px"></div>
<span class="t" style="top:932.55px;font-size:10.70px;letter-spacing:-0.420px;color:#c6c6c6;left:129.60px;">AM-S19XP-0106</span>
<span class="t" style="top:932.55px;font-size:10.70px;letter-spacing:-0.420px;color:#cb9c06;left:256.40px;">Maintenance</span>
<div class="clip" style="left:466.8px;top:930.15px"><span class="t" style="top:2.40px;font-size:10.70px;letter-spacing:-0.420px;color:#c6c6c6;left:0.00px;">HTM3X08</span></div>
<div class="clip" style="left:593.7px;top:930.15px"><span class="t" style="top:2.40px;font-size:10.70px;letter-spacing:-0.420px;color:#c6c6c6;left:0.00px;">8E:6D:4C:02:0E:14</span></div>
<svg width="20" height="18" style="left:820.6px;top:927.95px" viewBox="0 0 20 18"><path d="M10.05 2.3 L17.8 15.4 H2.3 Z" fill="#ffff00" stroke="#ffff00" stroke-width="3.5" stroke-linejoin="round"/><path d="M9.95 6.3 V10.7" stroke="#161600" stroke-width="1.25" stroke-linecap="round"/><circle cx="9.95" cy="12.9" r="0.8" fill="#161600"/></svg>
<span class="t" style="top:932.55px;font-size:10.70px;letter-spacing:-0.420px;color:#c6c6c6;left:845.20px;">error</span>
<div class="abs" style="left:926px;top:928.85px;width:15.8px;height:16.4px;border-radius:4px;background:#3b82f6"></div>
<svg width="10.6" height="13.8" style="left:928.7px;top:930.05px" viewBox="0 0 10 13"><path d="M6.3 0.6 L1 7.3 H4.4 L3.4 12.4 L9 5.4 H5.6 Z" fill="#0a0a0a"/></svg>
<span class="t" style="top:932.55px;font-size:10.70px;letter-spacing:-0.420px;color:#c6c6c6;left:947.40px;">sleep</span>
<span class="t" style="top:932.55px;font-size:10.70px;letter-spacing:-0.420px;color:#c6c6c6;left:1294.40px;">0 MH/s</span>
<span class="t" style="top:931.55px;font-size:10.70px;letter-spacing:-0.420px;color:#c6c6c6;left:1040.60px;">-</span>
<span class="t" style="top:931.55px;font-size:10.70px;letter-spacing:-0.420px;color:#c6c6c6;left:1167.60px;">-</span>
<div class="abs" style="left:89.6px;top:1005.20px;width:1295.6px;height:1px;background:#212121"></div>
<div class="cb" style="top:976.40px"></div>
<span class="t" style="top:978.50px;font-size:10.70px;letter-spacing:-0.420px;color:#c6c6c6;left:129.60px;">WM-M53S-0006</span>
<span class="t" style="top:978.50px;font-size:10.70px;letter-spacing:-0.420px;color:#cb9c06;left:256.40px;">Maintenance</span>
<div class="clip" style="left:466.8px;top:976.10px"><span class="t" style="top:2.40px;font-size:10.70px;letter-spacing:-0.420px;color:#c6c6c6;left:0.00px;">WTM3X02</span></div>
<div class="clip" style="left:593.7px;top:976.10px"><span class="t" style="top:2.40px;font-size:10.70px;letter-spacing:-0.420px;color:#c6c6c6;left:0.00px;">88:62:97:EF:13:66</span></div>
<svg width="12" height="12" style="left:823.40px;top:977.20px" viewBox="0 0 12 12"><circle cx="6" cy="6" r="5.3" fill="#cdcdcd"/><path d="M3.1 4.4 H7.1" stroke="#3c3c3c" stroke-width="1.25"/><path d="M6.4 7.7 H9.7" stroke="#484848" stroke-width="1.3"/><circle cx="3" cy="4.4" r="0.75" fill="#1e1e1e"/><circle cx="3" cy="7.2" r="0.6" fill="#4a4a4a"/><path d="M9.7 2.5 L3.7 10" stroke="#4e4e4e" stroke-width="0.95"/><path d="M8.9 2 L2.7 9.7" stroke="#ececec" stroke-width="0.8"/></svg>
<span class="t" style="top:978.50px;font-size:10.70px;letter-spacing:-0.420px;color:#c6c6c6;left:842.80px;">offline</span>
<span class="t" style="top:977.50px;font-size:10.70px;letter-spacing:-0.420px;color:#c6c6c6;left:926.40px;">-</span>
<span class="t" style="top:977.50px;font-size:10.70px;letter-spacing:-0.420px;color:#c6c6c6;left:1294.40px;">-</span>
<span class="t" style="top:977.50px;font-size:10.70px;letter-spacing:-0.420px;color:#c6c6c6;left:1040.60px;">-</span>
<span class="t" style="top:977.50px;font-size:10.70px;letter-spacing:-0.420px;color:#c6c6c6;left:1167.60px;">-</span>
<div class="abs" style="left:1147.0px;top:1029.6px;width:27.2px;height:26.7px;border:1px solid #2b2b2b;background:#0b0b0b"></div>
<svg width="8" height="10" style="left:1156.8px;top:1038px" viewBox="0 0 8 10" fill="none" stroke="#4c4c4c" stroke-width="1.15" stroke-linecap="round" stroke-linejoin="round"><path d="M6 1.5 L1.8 5 L6 8.5"/></svg>
<div class="abs" style="left:1180.6px;top:1029.6px;width:27.0px;height:26.7px;background:#40280c"></div>
<span class="t" style="top:1038.33px;font-size:12.49px;letter-spacing:-0.490px;color:#f7931a;-webkit-text-stroke:0.42px;left:1194.10px;width:400px;margin-left:-200px;text-align:center;">1</span>
<div class="abs" style="left:1214.0px;top:1029.6px;width:26.9px;height:26.7px;border:1px solid #343434;background:#0b0b0b"></div>
<span class="t" style="top:1038.33px;font-size:12.49px;letter-spacing:-0.490px;color:#f7931a;left:1227.40px;width:400px;margin-left:-200px;text-align:center;">2</span>
<div class="abs" style="left:1247.0px;top:1029.6px;width:27.3px;height:26.7px;border:1px solid #343434;background:#0b0b0b"></div>
<svg width="8" height="10" style="left:1256.6px;top:1038px" viewBox="0 0 8 10" fill="none" stroke="#c4c4c4" stroke-width="1.2" stroke-linecap="round" stroke-linejoin="round"><path d="M2 1.5 L6.2 5 L2 8.5"/></svg>
<div class="abs" style="left:1287.0px;top:1029.6px;width:98.8px;height:26.7px;border:1px solid #343434;background:#0b0b0b"></div>
<span class="t" style="top:1038.33px;font-size:12.49px;letter-spacing:-0.490px;color:#cfcfcf;left:1297.60px;">20 / page</span>
<svg width="9" height="7" style="left:1367.4px;top:1039.4px" viewBox="0 0 9 7" fill="none" stroke="#555" stroke-width="1.1" stroke-linecap="round" stroke-linejoin="round"><path d="M0.8 0.9 L4.5 5.8 L8.2 0.9"/></svg>
<div class="abs" style="left:1402.2px;top:117.5px;width:1.7px;height:979px;background:#1b1a18"></div>
<div class="abs" style="left:0;top:1098.6px;width:1999px;height:1.4px;background:#c9c9c9"></div>
<div class="box" style="left:1420px;top:118px;width:537px;height:75.6px;border-color:#1c1c1c"></div>
<span class="t" style="top:133.84px;font-size:17.84px;letter-spacing:-0.700px;color:#f2f2f2;-webkit-text-stroke:0.61px;left:1433.60px;">WM-M56S-0008</span>
<span class="t" style="top:163.24px;font-size:17.84px;letter-spacing:-0.700px;color:#f3b705;-webkit-text-stroke:0.61px;left:1433.60px;">MAINTENANCE</span>
<svg width="16" height="15" style="left:1927px;top:132.0px" viewBox="0 0 16 15" fill="none" stroke="#8c8c8c" stroke-width="1.25" stroke-linejoin="round"><path d="M3.2 10.6 A6.1 4.7 0 1 1 5.4 11.9 L1.4 13.4 Z"/></svg>
<div class="box" style="left:1420px;top:203.2px;width:533.2px;height:149.6px;border-color:#1c1c1c"></div>
<span class="t" style="top:218.77px;font-size:14.26px;letter-spacing:-0.560px;color:#dcdcdc;left:1437.60px;">MINER CONTROLS</span>
<div class="abs" style="left:1437.8px;top:247px;width:498px;height:26.8px;background:#f7931a"></div>
<span class="t" style="top:256.03px;font-size:12.49px;letter-spacing:-0.490px;color:#1c1206;left:1686.80px;width:400px;margin-left:-200px;text-align:center;">Change Miner Info</span>
<div class="abs" style="left:1437.8px;top:282.2px;width:498px;height:26.8px;background:#120d09;border:1px solid #4a4a4a"></div>
<span class="t" style="top:291.13px;font-size:12.49px;letter-spacing:-0.490px;color:#c8c8c8;left:1686.80px;width:400px;margin-left:-200px;text-align:center;">Back from Maintenance</span>
<div class="abs" style="left:1429.4px;top:304.4px;width:498.8px;height:4.6px;background:#fb2200"></div>
<div class="abs" style="left:1437.8px;top:317.2px;width:498px;height:26.8px;background:#ef4444"></div>
<span class="t" style="top:325.53px;font-size:12.49px;letter-spacing:-0.490px;color:#ffecec;left:1686.80px;width:400px;margin-left:-200px;text-align:center;">Remove Miner</span>
<div class="box" style="left:1420px;top:361.2px;width:533.2px;height:249.8px;border-color:#1c1c1c"></div>
<span class="t" style="top:378.37px;font-size:14.26px;letter-spacing:-0.560px;color:#e2e2e2;left:1433.60px;">MINER INFO</span>
<span class="t" style="top:407.50px;font-size:10.70px;letter-spacing:-0.420px;color:#a8a8a8;-webkit-text-stroke:0.36px;left:1433.60px;">Short Code:</span>
<span class="t" style="top:407.50px;font-size:10.70px;letter-spacing:-0.420px;color:#c8c8c8;-webkit-text-stroke:0.36px;right:59.40px;text-align:right;">WM-M56S-0008</span>
<span class="t" style="top:425.00px;font-size:10.70px;letter-spacing:-0.420px;color:#a8a8a8;-webkit-text-stroke:0.36px;left:1433.60px;">Rack:</span>
<span class="t" style="top:425.00px;font-size:10.70px;letter-spacing:-0.420px;color:#c8c8c8;-webkit-text-stroke:0.36px;right:59.40px;text-align:right;">miner-wm-m56s-shelf-0</span>
<span class="t" style="top:442.50px;font-size:10.70px;letter-spacing:-0.420px;color:#a8a8a8;-webkit-text-stroke:0.36px;left:1433.60px;">Model:</span>
<span class="t" style="top:442.50px;font-size:10.70px;letter-spacing:-0.420px;color:#c8c8c8;-webkit-text-stroke:0.36px;right:59.40px;text-align:right;">miner-wm-m56s</span>
<span class="t" style="top:460.00px;font-size:10.70px;letter-spacing:-0.420px;color:#a8a8a8;-webkit-text-stroke:0.36px;left:1433.60px;">IP Address:</span>
<span class="t" style="top:477.50px;font-size:10.70px;letter-spacing:-0.420px;color:#a8a8a8;-webkit-text-stroke:0.36px;left:1433.60px;">Serial num:</span>
<span class="t" style="top:477.50px;font-size:10.70px;letter-spacing:-0.420px;color:#c8c8c8;-webkit-text-stroke:0.36px;right:59.40px;text-align:right;">AH-HTM3X01_50</span>
<span class="t" style="top:495.00px;font-size:10.70px;letter-spacing:-0.420px;color:#a8a8a8;-webkit-text-stroke:0.36px;left:1433.60px;">MAC Address:</span>
<span class="t" style="top:495.00px;font-size:10.70px;letter-spacing:-0.420px;color:#c8c8c8;-webkit-text-stroke:0.36px;right:59.40px;text-align:right;">23:1A:2B:3C:4D:5E</span>
<span class="t" style="top:512.50px;font-size:10.70px;letter-spacing:-0.420px;color:#a8a8a8;-webkit-text-stroke:0.36px;left:1433.60px;">Subnet:</span>
<span class="t" style="top:530.00px;font-size:10.70px;letter-spacing:-0.420px;color:#a8a8a8;-webkit-text-stroke:0.36px;left:1433.60px;">Firmware:</span>
<span class="t" style="top:547.50px;font-size:10.70px;letter-spacing:-0.420px;color:#a8a8a8;-webkit-text-stroke:0.36px;left:1433.60px;">Pos. History</span>
<span class="t" style="top:565.00px;font-size:10.70px;letter-spacing:-0.420px;color:#a8a8a8;-webkit-text-stroke:0.36px;left:1433.60px;">Pools:</span>
<span class="t" style="top:582.50px;font-size:10.70px;letter-spacing:-0.420px;color:#a8a8a8;-webkit-text-stroke:0.36px;left:1433.60px;">Id:</span>
<span class="t" style="top:582.50px;font-size:10.70px;letter-spacing:-0.420px;color:#c8c8c8;-webkit-text-stroke:0.36px;right:59.40px;text-align:right;">5mo551l6rplhqht</span>
<div class="box" style="left:1420px;top:620.4px;width:533.2px;height:163.4px;border-color:#1c1c1c"></div>
<span class="t" style="top:636.37px;font-size:14.26px;letter-spacing:-0.560px;color:#e2e2e2;left:1433.60px;">SELECTED 1 MINERS</span>
<div class="btn" style="left:1847px;top:656.3px;width:97px;height:26.7px;border-color:#3a3a3a"></div>
<span class="t" style="top:665.13px;font-size:12.49px;letter-spacing:-0.490px;color:#d8d8d8;left:1895.60px;width:400px;margin-left:-200px;text-align:center;">Remove All</span>
<div class="abs" style="left:1430.2px;top:692.2px;width:518px;height:76.8px;border:1px solid #232323;border-right:none"></div>
<svg width="12" height="12" style="left:1438.00px;top:704.50px" viewBox="0 0 12 12"><circle cx="6" cy="6" r="5.3" fill="#cdcdcd"/><path d="M3.1 4.4 H7.1" stroke="#3c3c3c" stroke-width="1.25"/><path d="M6.4 7.7 H9.7" stroke="#484848" stroke-width="1.3"/><circle cx="3" cy="4.4" r="0.75" fill="#1e1e1e"/><circle cx="3" cy="7.2" r="0.6" fill="#4a4a4a"/><path d="M9.7 2.5 L3.7 10" stroke="#4e4e4e" stroke-width="0.95"/><path d="M8.9 2 L2.7 9.7" stroke="#ececec" stroke-width="0.8"/></svg>
<span class="t" style="top:704.12px;font-size:11.59px;letter-spacing:-0.455px;color:#e8e8e8;-webkit-text-stroke:0.39px;left:1456.60px;">WM-M56S-0008</span>
<span class="t" style="top:743.40px;font-size:10.70px;letter-spacing:-0.420px;color:#7a7a7a;left:1435.00px;">maintenance</span>
<span class="t" style="top:744.92px;font-size:6.63px;letter-spacing:-0.260px;color:#7a7a7a;left:1508.60px;">•</span>
<div class="btn" style="left:1919.8px;top:697.4px;width:26.6px;height:26.6px;border-color:#3a3a3a"></div>
<svg width="10" height="11" style="left:1928.2px;top:705.2px" viewBox="0 0 10 11" fill="#f0f0f0"><path d="M3.4 0.4 H6.6 V1.5 H9.4 V2.7 H0.6 V1.5 H3.4 Z M1.4 3.4 H8.6 L8.1 10.6 H1.9 Z"/></svg>
</div>
</body>
</html>
